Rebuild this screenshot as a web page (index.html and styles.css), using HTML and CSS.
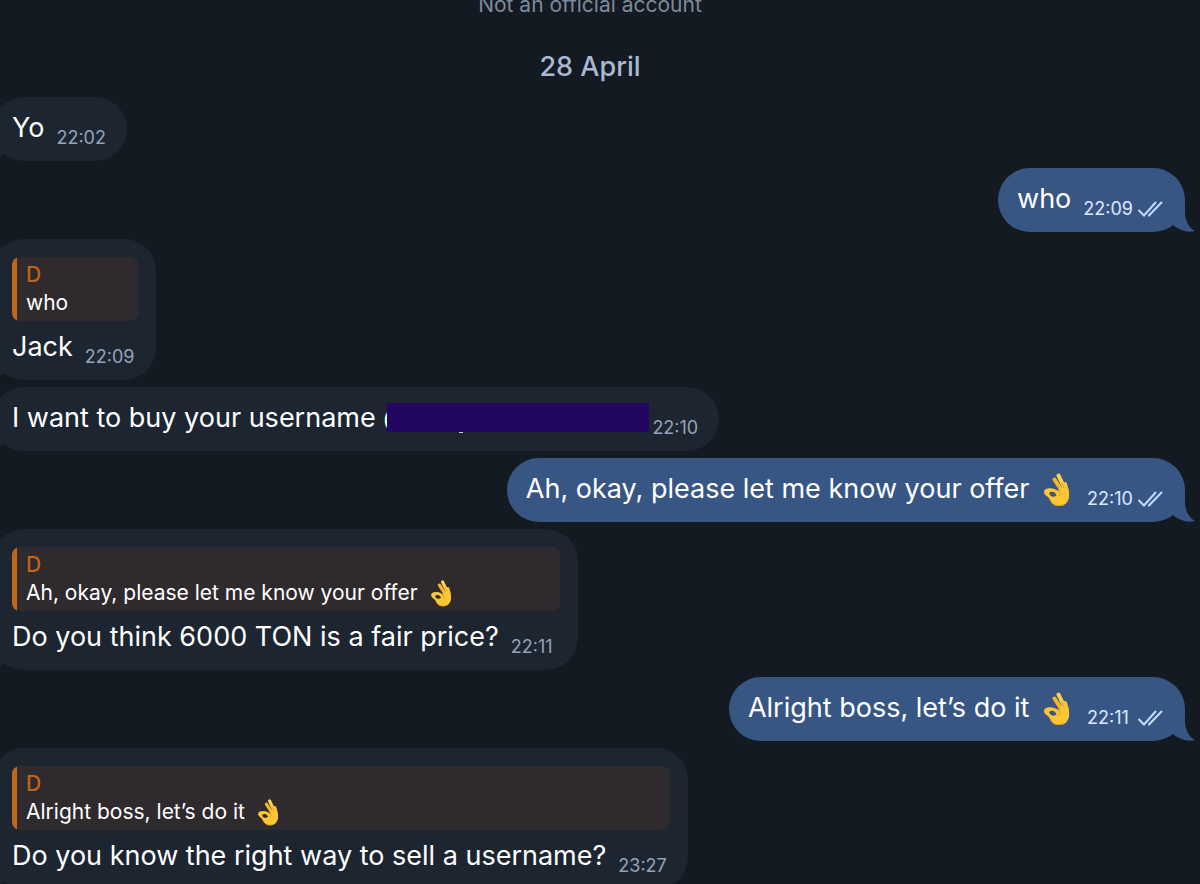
FILE: index.html
```
<!DOCTYPE html>
<html lang="en">
<head>
  <meta charset="UTF-8">
  <meta name="viewport" content="width=device-width, initial-scale=1.0">
  <title>chat</title>
  <link rel="stylesheet" href="styles.css">
</head>
<body>
  <svg class="sprite" aria-hidden="true">
    <symbol id="tail" viewBox="0 0 30 32">
      <path d="M8 0H20V12C20 20 24 28 30 31C22 33 14 30 8 25L0 20Z"/>
    </symbol>
    <symbol id="checks" viewBox="0 0 26 18">
      <path d="M1.500 10L7 15.500L19 2M11 15.500L12 15.500L25 2" fill="none" stroke="currentColor" stroke-width="2"/>
    </symbol>
    <symbol id="ok" viewBox="0 0 27 34">
      <g fill="none" stroke-linecap="round" stroke-width="4">
        <path d="M15.500 2.500L21 14L23 22" stroke="#ffd04a"/>
        <path d="M11.500 6.500L17 15L19 23" stroke="#f5b52a"/>
        <path d="M22 11Q24.500 17 24 24" stroke="#fdc535"/>
      </g>
      <path fill-rule="evenodd" fill="#fdc632" d="M1 19C1 16.500 4 15 7.500 15.200C12 15.500 15 17 17 20L18 14L25 16C27 21 26.500 27 23 30.500C20 33.500 14 34 10.500 31.500C8 29.700 7.500 27 5.500 24.500C3.500 23 1 21.500 1 19ZM6 20C7 23.500 10.500 25 13.500 22.500C12.500 19 9 17.500 6 20Z"/>
      <path d="M7.500 27C9 32 15 34 20 31.500" fill="none" stroke="#eb9a1c" stroke-width="1"/>
      <path d="M15 24Q18 22 17 19M18.500 9.500L21 15" fill="none" stroke="#e9a020" stroke-width="1"/>
    </symbol>
  </svg>
  <main class="chat">
    <p class="notice">Not an official account</p>
    <h1 class="date">28 April</h1>

    <article class="msg">
      <div class="msg__row">
        <p class="msg__text">Yo</p>
        <time class="msg__time">22:02</time>
      </div>
      <svg class="msg__tail"><use href="#tail"/></svg>
    </article>

    <article class="msg msg--out">
      <div class="msg__row">
        <p class="msg__text">who</p>
        <time class="msg__time">22:09</time>
        <svg class="msg__checks"><use href="#checks"/></svg>
      </div>
      <svg class="msg__tail"><use href="#tail"/></svg>
    </article>

    <article class="msg">
      <blockquote class="quote">
        <p class="quote__name">D</p>
        <p class="quote__text">who</p>
      </blockquote>
      <div class="msg__row">
        <p class="msg__text">Jack</p>
        <time class="msg__time">22:09</time>
      </div>
      <svg class="msg__tail"><use href="#tail"/></svg>
    </article>

    <article class="msg">
      <div class="msg__row msg__row--tight">
        <p class="msg__text">I want to buy your username @<span class="redacted"></span></p>
        <time class="msg__time">22:10</time>
      </div>
      <svg class="msg__tail"><use href="#tail"/></svg>
    </article>

    <article class="msg msg--out">
      <div class="msg__row">
        <p class="msg__text">Ah, okay, please let me know your offer <svg class="emoji"><use href="#ok"/></svg></p>
        <time class="msg__time">22:10</time>
        <svg class="msg__checks"><use href="#checks"/></svg>
      </div>
      <svg class="msg__tail"><use href="#tail"/></svg>
    </article>

    <article class="msg">
      <blockquote class="quote">
        <p class="quote__name">D</p>
        <p class="quote__text">Ah, okay, please let me know your offer <svg class="emoji emoji--small"><use href="#ok"/></svg></p>
      </blockquote>
      <div class="msg__row">
        <p class="msg__text">Do you think 6000 TON is a fair price?</p>
        <time class="msg__time">22:11</time>
      </div>
      <svg class="msg__tail"><use href="#tail"/></svg>
    </article>

    <article class="msg msg--out">
      <div class="msg__row">
        <p class="msg__text">Alright boss, let’s do it <svg class="emoji"><use href="#ok"/></svg></p>
        <time class="msg__time">22:11</time>
        <svg class="msg__checks"><use href="#checks"/></svg>
      </div>
      <svg class="msg__tail"><use href="#tail"/></svg>
    </article>

    <article class="msg">
      <blockquote class="quote">
        <p class="quote__name">D</p>
        <p class="quote__text">Alright boss, let’s do it <svg class="emoji emoji--small"><use href="#ok"/></svg></p>
      </blockquote>
      <div class="msg__row">
        <p class="msg__text">Do you know the right way to sell a username?</p>
        <time class="msg__time">23:27</time>
      </div>
      <svg class="msg__tail"><use href="#tail"/></svg>
    </article>
  </main>
</body>
</html>
```
FILE: styles.css
```
body{
  margin: 0;
  height: 100vh;
  overflow: hidden;
  background: #141a21;
  color: #fff;
  font-family: Inter, "Liberation Sans", sans-serif;
}
p, h1, blockquote{
  margin: 0;
}
.sprite{
  position: absolute;
  width: 0;
  height: 0;
}

/* scrolled a little, so the notice is cut by the top edge */
.chat{
  display: flex;
  flex-direction: column;
  align-items: flex-start;
  gap: 7px;
  margin-top: -9px;
  padding-right: 15px;
}
.notice, .date{
  align-self: stretch;
  padding-right: 5px;
  text-align: center;
}
.notice{
  color: #7d8a9b;
  font-size: 21px;
  line-height: 28px;
}
.date{
  margin: 23px 0 5px;
  color: #a9b8d3;
  font-size: 27px;
  font-weight: 500;
  line-height: 36px;
}

.msg{
  position: relative;
  margin-left: -8px;
  padding: 13px 18px 11px 20px;
  border-radius: 32px;
  background: #1c2530;
  color: #1c2530;
}
.msg--out{
  align-self: flex-end;
  margin-left: 0;
  padding: 13px 19px 11px;
  background: #385684;
  color: #385684;
}
.msg__tail{
  position: absolute;
  left: -10px;
  bottom: 0;
  width: 30px;
  height: 32px;
  fill: currentColor;
  transform: scaleX(-1);
}
.msg--out .msg__tail{
  left: auto;
  right: -10px;
  transform: none;
}
.msg__row{
  display: flex;
  align-items: flex-end;
  gap: 12px;
  padding-right: 3px;
}
.msg__row--tight{
  gap: 3px;
}
.msg__text{
  margin-bottom: 4px;
  color: #fff;
  font-size: 27px;
  line-height: 36px;
}
.msg__time{
  min-width: 46px;
  color: #95a3b8;
  font-size: 18px;
  line-height: 24px;
}
.msg--out .msg__time{
  color: #dce9ff;
}
.msg__checks{
  width: 26px;
  height: 18px;
  margin: 0 0 3px -8px;
  color: #c5dcff;
}

.quote{
  margin: 5px 0 8px;
  padding: 4px 9px;
  border-radius: 8px;
  background: linear-gradient(90deg, #c0651a 5px, #2e2a2e 5px);
  padding-left: 14px;
}
.quote__name{
  color: #c0651a;
  font-size: 21px;
  font-weight: 500;
  line-height: 28px;
}
.quote__text{
  color: #fff;
  font-size: 21px;
  line-height: 28px;
}

.emoji{
  width: 27px;
  height: 34px;
  margin: -4px 5px -4px 6px;
  vertical-align: -5px;
}
.emoji--small{
  width: 22px;
  height: 27px;
  vertical-align: -3px;
}
.redacted{
  display: inline-block;
  position: relative;
  width: 262px;
  height: 29px;
  margin-left: -22px;
  background: #220662;
  vertical-align: -5px;
}
/* descender of the hidden name, showing under the bar */
.redacted::after{
  content: "";
  position: absolute;
  left: 72px;
  top: 100%;
  width: 4px;
  height: 1px;
  background: #c8ced6;
}
```
